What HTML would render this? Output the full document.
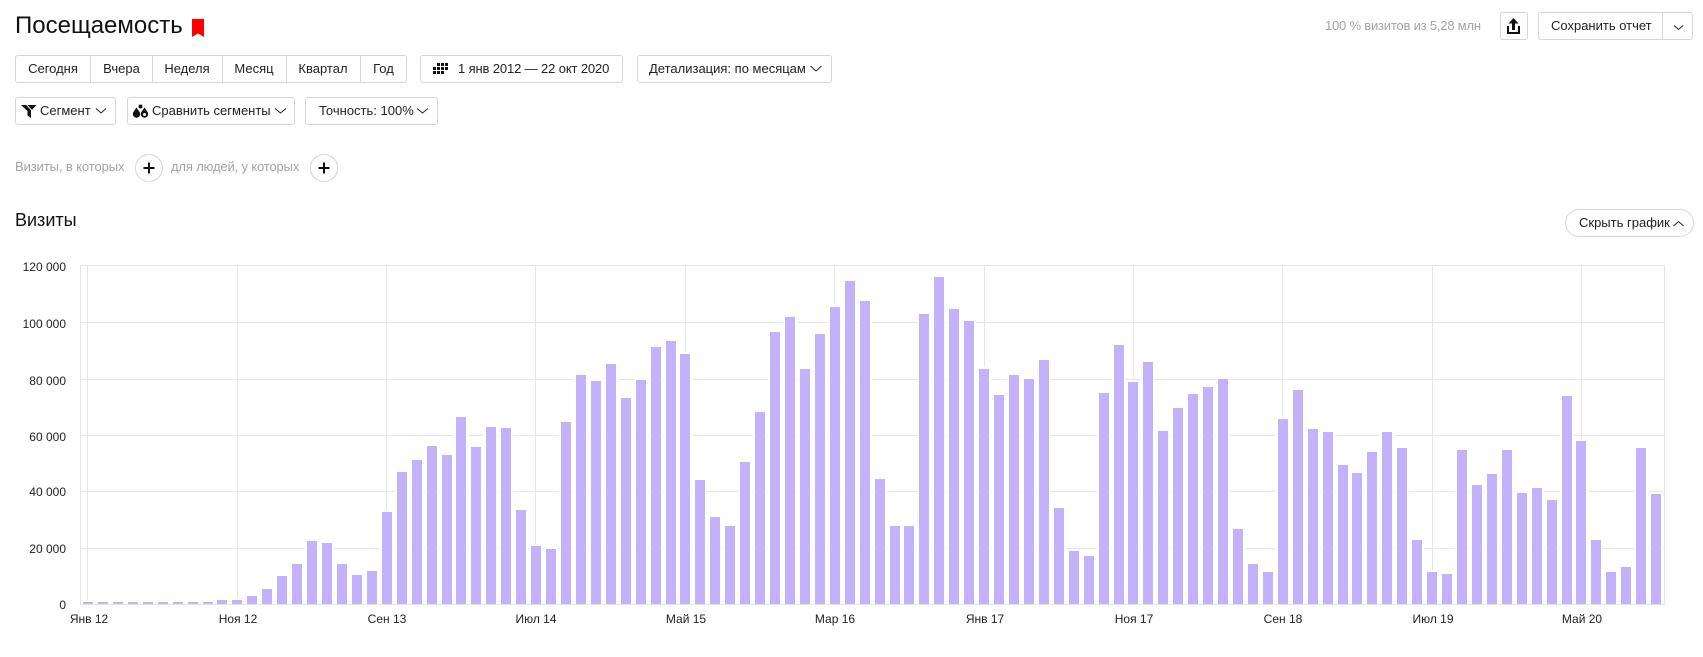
<!DOCTYPE html>
<html lang="ru">
<head>
<meta charset="utf-8">
<title>Посещаемость</title>
<style>
html,body{margin:0;padding:0;background:#fff;}
body{position:relative;width:1703px;height:657px;overflow:hidden;font-family:"Liberation Sans",Arial,sans-serif;color:#222;}
.t{position:absolute;white-space:nowrap;}
.b{position:absolute;box-sizing:border-box;height:28px;border:1px solid #d6d6d6;background:#fff;border-radius:3px;font-size:13px;line-height:26px;text-align:center;white-space:nowrap;color:#222;}
.l{position:absolute;top:0;bottom:0;width:1px;background:#d6d6d6;}
.g{color:#a3a3a3;font-size:13px;line-height:16px;}
svg{position:absolute;left:0;top:0;}
svg text{font-family:"Liberation Sans",Arial,sans-serif;font-size:12px;fill:#222;}
</style>
</head>
<body>
<div class="t" style="left:15px;top:12px;font-size:24px;line-height:28px;color:#111;">Посещаемость</div>

<div class="b" style="left:15px;top:55px;width:392px;"></div>
<div class="b" style="left:15px;top:55px;width:76px;border:0;background:none;line-height:28px;">Сегодня</div>
<div class="b" style="left:91px;top:55px;width:61px;border:0;background:none;line-height:28px;">Вчера</div>
<div class="b" style="left:152px;top:55px;width:70px;border:0;background:none;line-height:28px;">Неделя</div>
<div class="b" style="left:222px;top:55px;width:64px;border:0;background:none;line-height:28px;">Месяц</div>
<div class="b" style="left:286px;top:55px;width:74px;border:0;background:none;line-height:28px;">Квартал</div>
<div class="b" style="left:360px;top:55px;width:47px;border:0;background:none;line-height:28px;">Год</div>
<div class="l" style="left:90px;top:55px;height:28px;"></div>
<div class="l" style="left:152px;top:55px;height:28px;"></div>
<div class="l" style="left:222px;top:55px;height:28px;"></div>
<div class="l" style="left:286px;top:55px;height:28px;"></div>
<div class="l" style="left:360px;top:55px;height:28px;"></div>

<div class="b" style="left:420px;top:55px;width:203px;text-align:left;padding-left:37px;letter-spacing:-.13px;">1 янв 2012 — 22 окт 2020</div>
<div class="b" style="left:637px;top:55px;width:195px;text-align:left;padding-left:11px;">Детализация: по месяцам</div>

<div class="b" style="left:15px;top:97px;width:101px;text-align:left;padding-left:24px;">Сегмент</div>
<div class="b" style="left:127px;top:97px;width:168px;text-align:left;padding-left:24px;">Сравнить сегменты</div>
<div class="b" style="left:305px;top:97px;width:133px;text-align:left;padding-left:13px;">Точность: 100%</div>

<div class="t g" style="left:15px;top:159px;letter-spacing:-.1px;">Визиты, в которых</div>
<div class="t g" style="left:171px;top:159px;letter-spacing:-.15px;">для людей, у которых</div>

<div class="t g" style="left:1325px;top:18px;letter-spacing:-.2px;">100 % визитов из 5,28 млн</div>
<div class="b" style="left:1500px;top:12px;width:28px;"></div>
<div class="b" style="left:1538px;top:12px;width:155px;text-align:left;padding-left:12px;">Сохранить отчет</div>
<div class="l" style="left:1662px;top:12px;height:28px;"></div>

<div class="t" style="left:15px;top:209px;font-size:18px;line-height:22px;color:#111;">Визиты</div>
<div class="b" style="left:1565px;top:209px;width:129px;border-radius:14px;text-align:left;padding-left:13px;">Скрыть график</div>

<svg width="1703" height="657" viewBox="0 0 1703 657" xmlns="http://www.w3.org/2000/svg">
<!-- icons -->
<path d="M192 19h12v18l-6-3.500-6 3.500z" fill="#f00"/>
<path fill="#111" d="M437 63h3v3h-3zM441 63h3v3h-3zM445 63h3v3h-3zM433 67h3v3h-3zM437 67h3v3h-3zM441 67h3v3h-3zM445 67h3v3h-3zM433 71h3v3h-3zM437 71h3v3h-3zM441 71h3v3h-3z"/>
<path fill="none" stroke="#222" stroke-width="1" d="M810.500 66l5.500 5 5.500-5M96 108.500l5 4.500 5-4.500M275 108.500l5.500 4.500 5.500-4.500M417 108.500l5.500 4.500 5.500-4.500M1674 25.500l4.500 4 4.500-4M1673.500 226l5-4.500 5 4.500"/>
<path fill="#111" d="M21 105h15.500l-5.500 6v7l-3.500-2.500v-4.500z"/>
<path fill="#fff" d="M27.500 105l5 5.500-.8.800-5.400-6.300z"/>
<circle cx="140.500" cy="106.500" r="2" fill="#111"/>
<path fill="#111" d="M136.500 107.500c1.500 2.500 3.700 4.500 3.700 6.500a3.700 3.700 0 0 1-7.400 0c0-2 2.200-4 3.700-6.500zM144.500 107.500c1.500 2.500 3.700 4.500 3.700 6.500a3.700 3.700 0 0 1-7.400 0c0-2 2.200-4 3.700-6.500z"/>
<circle cx="144.500" cy="114.500" r="1.500" fill="#fff"/>
<path fill="#111" d="M1513.500 18l5 5.500h-3.500v6.500h-3v-6.500h-3.500z"/>
<path fill="none" stroke="#111" stroke-width="2" d="M1508 26v7h11v-7"/>
<circle cx="149" cy="168" r="13.500" fill="#fff" stroke="#d6d6d6"/>
<circle cx="324" cy="168" r="13.500" fill="#fff" stroke="#d6d6d6"/>
<path fill="none" stroke="#111" stroke-width="2" d="M143.500 168h11M149 162.500v11M318.500 168h11M324 162.500v11"/>

<!-- grid -->
<g fill="#e6e6e6" shape-rendering="crispEdges">
<rect x="80" y="265" width="1585" height="1"/>
<rect x="80" y="322" width="1585" height="1"/>
<rect x="80" y="379" width="1585" height="1"/>
<rect x="80" y="435" width="1585" height="1"/>
<rect x="80" y="491" width="1585" height="1"/>
<rect x="80" y="548" width="1585" height="1"/>
<rect x="80" y="265" width="1" height="340"/>
<rect x="87" y="265" width="1" height="340"/>
<rect x="237" y="265" width="1" height="340"/>
<rect x="386" y="265" width="1" height="340"/>
<rect x="535" y="265" width="1" height="340"/>
<rect x="685" y="265" width="1" height="340"/>
<rect x="834" y="265" width="1" height="340"/>
<rect x="984" y="265" width="1" height="340"/>
<rect x="1133" y="265" width="1" height="340"/>
<rect x="1282" y="265" width="1" height="340"/>
<rect x="1432" y="265" width="1" height="340"/>
<rect x="1581" y="265" width="1" height="340"/>
<rect x="1664" y="265" width="1" height="340"/>
</g>
<!-- bars -->
<path fill="#c3b1f9" stroke="#fff" stroke-width="4" paint-order="stroke" shape-rendering="crispEdges" d="M83 602h10V604h-10zM98 602h10V604h-10zM113 602h10V604h-10zM128 602h10V604h-10zM143 602h10V604h-10zM158 602h10V604h-10zM173 602h10V604h-10zM188 602h10V604h-10zM203 602h10V604h-10zM217 600h10V604h-10zM232 600h10V604h-10zM247 596h10V604h-10zM262 589h10V604h-10zM277 576h10V604h-10zM292 564h10V604h-10zM307 541h10V604h-10zM322 543h10V604h-10zM337 564h10V604h-10zM352 575h10V604h-10zM367 571h10V604h-10zM382 512h10V604h-10zM397 472h10V604h-10zM412 460h10V604h-10zM427 446h10V604h-10zM442 455h10V604h-10zM456 417h10V604h-10zM471 447h10V604h-10zM486 427h10V604h-10zM501 428h10V604h-10zM516 510h10V604h-10zM531 546h10V604h-10zM546 549h10V604h-10zM561 422h10V604h-10zM576 375h10V604h-10zM591 381h10V604h-10zM606 364h10V604h-10zM621 398h10V604h-10zM636 380h10V604h-10zM651 347h10V604h-10zM666 341h10V604h-10zM680 354h10V604h-10zM695 480h10V604h-10zM710 517h10V604h-10zM725 526h10V604h-10zM740 462h10V604h-10zM755 412h10V604h-10zM770 332h10V604h-10zM785 317h10V604h-10zM800 369h10V604h-10zM815 334h10V604h-10zM830 307h10V604h-10zM845 281h10V604h-10zM860 301h10V604h-10zM875 479h10V604h-10zM890 526h10V604h-10zM904 526h10V604h-10zM919 314h10V604h-10zM934 277h10V604h-10zM949 309h10V604h-10zM964 321h10V604h-10zM979 369h10V604h-10zM994 395h10V604h-10zM1009 375h10V604h-10zM1024 379h10V604h-10zM1039 360h10V604h-10zM1054 508h10V604h-10zM1069 551h10V604h-10zM1084 556h10V604h-10zM1099 393h10V604h-10zM1114 345h10V604h-10zM1128 382h10V604h-10zM1143 362h10V604h-10zM1158 431h10V604h-10zM1173 408h10V604h-10zM1188 394h10V604h-10zM1203 387h10V604h-10zM1218 379h10V604h-10zM1233 529h10V604h-10zM1248 564h10V604h-10zM1263 572h10V604h-10zM1278 419h10V604h-10zM1293 390h10V604h-10zM1308 429h10V604h-10zM1323 432h10V604h-10zM1338 465h10V604h-10zM1352 473h10V604h-10zM1367 452h10V604h-10zM1382 432h10V604h-10zM1397 448h10V604h-10zM1412 540h10V604h-10zM1427 572h10V604h-10zM1442 574h10V604h-10zM1457 450h10V604h-10zM1472 485h10V604h-10zM1487 474h10V604h-10zM1502 450h10V604h-10zM1517 493h10V604h-10zM1532 488h10V604h-10zM1547 500h10V604h-10zM1562 396h10V604h-10zM1576 441h10V604h-10zM1591 540h10V604h-10zM1606 572h10V604h-10zM1621 567h10V604h-10zM1636 448h10V604h-10zM1651 494h10V604h-10z"/>
<rect x="80" y="604" width="1585" height="1" fill="#e6e6e6" shape-rendering="crispEdges"/>
<rect x="1664" y="265" width="1" height="340" fill="#e6e6e6" shape-rendering="crispEdges"/>
<!-- y labels -->
<g text-anchor="end">
<text x="66" y="271">120 000</text>
<text x="66" y="328">100 000</text>
<text x="66" y="385">80 000</text>
<text x="66" y="441">60 000</text>
<text x="66" y="496">40 000</text>
<text x="66" y="553">20 000</text>
<text x="66" y="609">0</text>
</g>
<!-- x labels -->
<g text-anchor="middle">
<text x="89" y="623">Янв 12</text>
<text x="238" y="623">Ноя 12</text>
<text x="387" y="623">Сен 13</text>
<text x="536" y="623">Июл 14</text>
<text x="686" y="623">Май 15</text>
<text x="835" y="623">Мар 16</text>
<text x="985" y="623">Янв 17</text>
<text x="1134" y="623">Ноя 17</text>
<text x="1283" y="623">Сен 18</text>
<text x="1433" y="623">Июл 19</text>
<text x="1582" y="623">Май 20</text>
</g>
</svg>
</body>
</html>
